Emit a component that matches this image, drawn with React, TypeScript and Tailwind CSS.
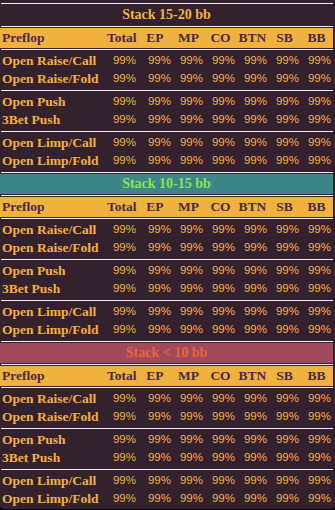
const cols = ['Total', 'EP', 'MP', 'CO', 'BTN', 'SB', 'BB']

const groups = [
  ['Open Raise/Call', 'Open Raise/Fold'],
  ['Open Push', '3Bet Push'],
  ['Open Limp/Call', 'Open Limp/Fold'],
]

const sections = [
  { title: 'Stack 15-20 bb', band: 'bg-[#33212e]', text: 'text-[#f2b43e]' },
  { title: 'Stack 10-15 bb', band: 'bg-[#3d8688]', text: 'text-[#8fe24e]' },
  { title: 'Stack < 10 bb', band: 'bg-[#a14a5b]', text: 'text-[#e8653c]' },
]

const grid = 'grid grid-cols-[104px_32px_35px_32px_32px_32px_32px_32px]'
const slab = "font-['Liberation_Serif',serif] font-bold"

const Line = () => <div className="h-px bg-[#f4eef0] ml-[1px] mr-[2px]" />

const Section = ({ title, band, text }: { title: string; band: string; text: string }) => {
  return (
    <div>
      <Line />
      <div className="h-[22px] py-px pr-[2px]">
        <div className={`h-full ${band} flex items-center justify-center`}>
          <span className={`${slab} ${text} text-[14px] leading-none`}>{title}</span>
        </div>
      </div>
      <Line />
      <div className="h-[22px] py-px pr-[2px]">
        <div className={`h-full bg-[#f1b13f] ${grid} items-center text-[#4a2946] text-[13.5px] leading-none ${slab}`}>
          <span className="pl-[2px]">Preflop</span>
          {cols.map((c) => (
            <span key={c} className="text-center pl-[3px]">
              {c}
            </span>
          ))}
        </div>
      </div>
      {groups.map((g, i) => (
        <div key={i}>
          <Line />
          <div className="h-10 py-[2px]">
            {g.map((label) => (
              <div key={label} className={`${grid} h-[18px] items-center`}>
                <span className={`${slab} text-[13.5px] leading-none text-[#f4b03a] pl-[2px] whitespace-nowrap`}>
                  {label}
                </span>
                {cols.map((c) => (
                  <span
                    key={c}
                    className="text-right text-[11.5px] leading-none text-[#f2b540] font-['Liberation_Sans',sans-serif]"
                  >
                    99%
                  </span>
                ))}
              </div>
            ))}
          </div>
        </div>
      ))}
    </div>
  )
}

export default function App() {
  return (
    <div className="w-[335px] h-[510px] bg-black overflow-hidden">
      <div className="h-[509px] bg-[#33212e] rounded-b-[4px] pt-[3px] overflow-hidden">
        {sections.map((s) => (
          <Section key={s.title} {...s} />
        ))}
      </div>
    </div>
  )
}
